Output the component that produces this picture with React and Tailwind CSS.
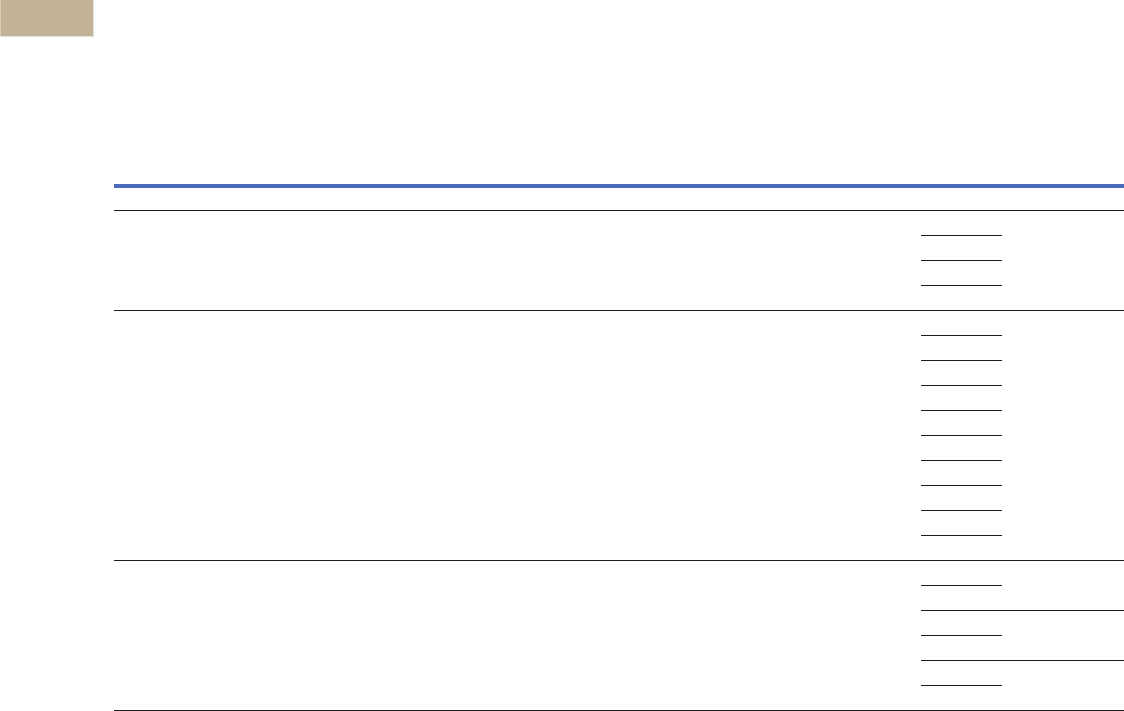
const GROUPS = [
  { rows: 4, wide: [] },
  { rows: 10, wide: [] },
  { rows: 6, wide: [1, 3] },
]

function Group({ rows, wide }) {
  return (
    <div className="flex flex-col">
      {Array.from({ length: rows }).map((_, i) => {
        const last = i === rows - 1
        const isWide = wide.includes(i)
        if (last) {
          return <div key={i} className="h-[25px] border-b border-[#1e1e1e]" />
        }
        return (
          <div key={i} className="flex h-[25px]">
            <div className="w-[807px] shrink-0" />
            <div className="w-[81px] shrink-0 border-b border-[#1e1e1e]" />
            <div
              className={
                isWide
                  ? 'w-[200px] shrink-0 border-b border-[#1e1e1e]'
                  : 'w-[200px] shrink-0'
              }
            />
          </div>
        )
      })}
    </div>
  )
}

export default function App() {
  return (
    <div className="relative h-[711px] w-[1124px] overflow-hidden bg-white font-['Liberation_Sans',sans-serif]">
      <div className="h-[36px] w-[93px] border-l border-[#d8cdb6] bg-[#c2b396] shadow-[1px_1px_1px_rgba(0,0,0,0.12)]" />
      <div className="pl-[114px] pt-[148px]">
        <div className="w-[1100px]">
          <div className="h-[4px] bg-[#4a6bbd]" />
          <div className="h-[23px] border-b border-[#1e1e1e]" />
          {GROUPS.map((g, i) => (
            <Group key={i} rows={g.rows} wide={g.wide} />
          ))}
        </div>
      </div>
    </div>
  )
}
